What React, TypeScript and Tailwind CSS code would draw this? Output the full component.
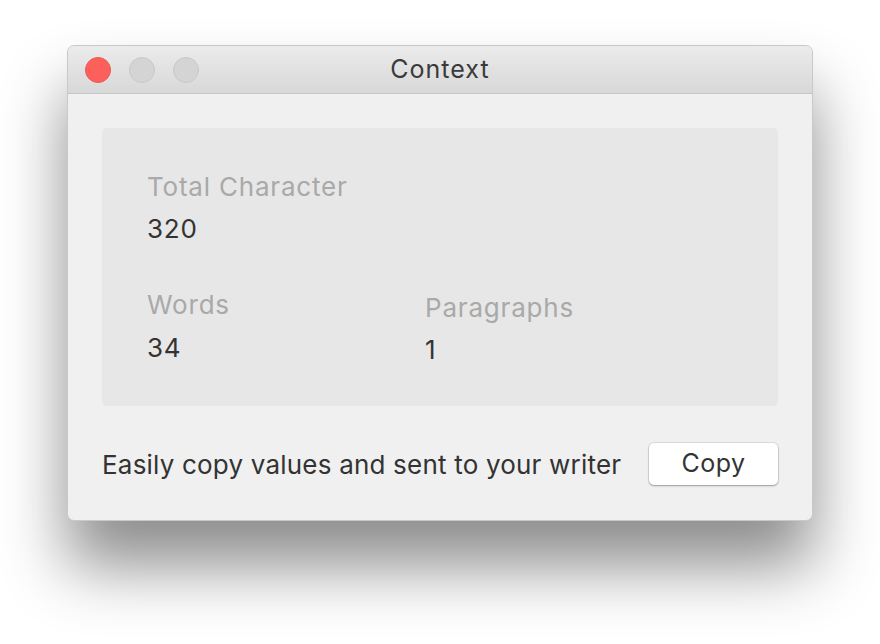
export default function App() {
  return (
    <div className="w-[880px] h-[644px] bg-white pt-[45px] pl-[67px] font-['Inter',sans-serif]">
      <div className="w-[746px] h-[476px] rounded-[7px] bg-[#f0f0f0] flex flex-col overflow-hidden border border-[#c9c9c9] shadow-[0_45px_65px_rgba(0,0,0,0.45)]">
        <div className="h-[48px] flex items-center px-[17px] bg-gradient-to-b from-[#ebebeb] to-[#d8d8d8] border-b border-[#c6c6c6] relative">
          <div className="flex gap-[18px]">
            <div className="w-[26px] h-[26px] rounded-full bg-[#fd605a] border border-[#e9574f]"></div>
            <div className="w-[26px] h-[26px] rounded-full bg-[#d4d4d4] border border-[#c8c8c8]"></div>
            <div className="w-[26px] h-[26px] rounded-full bg-[#d4d4d4] border border-[#c8c8c8]"></div>
          </div>
          <div className="absolute inset-0 flex items-center justify-center text-[25px] tracking-[1px] text-[#3a3a3a]">
            Context
          </div>
        </div>

        <div className="flex flex-col px-[34px] pt-[34px]">
          <div className="h-[278px] rounded-[5px] bg-[#e7e7e7] pl-[45px] pt-[44px] tracking-[0.8px]">
            <div className="flex flex-col">
              <span className="text-[26px] leading-[30px] text-[#a9a9a9]">Total Character</span>
              <span className="text-[26px] leading-[30px] mt-[12px] text-[#333333]">320</span>
            </div>
            <div className="flex mt-[46px]">
              <div className="flex flex-col w-[278px]">
                <span className="text-[26px] leading-[30px] text-[#a9a9a9]">Words</span>
                <span className="text-[26px] leading-[30px] mt-[13px] text-[#333333]">34</span>
              </div>
              <div className="flex flex-col pt-[3px]">
                <span className="text-[26px] leading-[30px] text-[#a9a9a9]">Paragraphs</span>
                <span className="text-[26px] leading-[30px] mt-[12px] text-[#333333]">1</span>
              </div>
            </div>
          </div>

          <div className="flex items-center justify-between mt-[37px]">
            <span className="text-[26px] tracking-[0.2px] text-[#333333]">Easily copy values and sent to your writer</span>
            <button className="w-[129px] h-[42px] rounded-[5px] bg-white text-[25px] tracking-[0.5px] text-[#333333] shadow-[0_1px_2px_rgba(0,0,0,0.3),0_0_0_1px_rgba(0,0,0,0.08)]">
              Copy
            </button>
          </div>
        </div>
      </div>
    </div>
  );
}
